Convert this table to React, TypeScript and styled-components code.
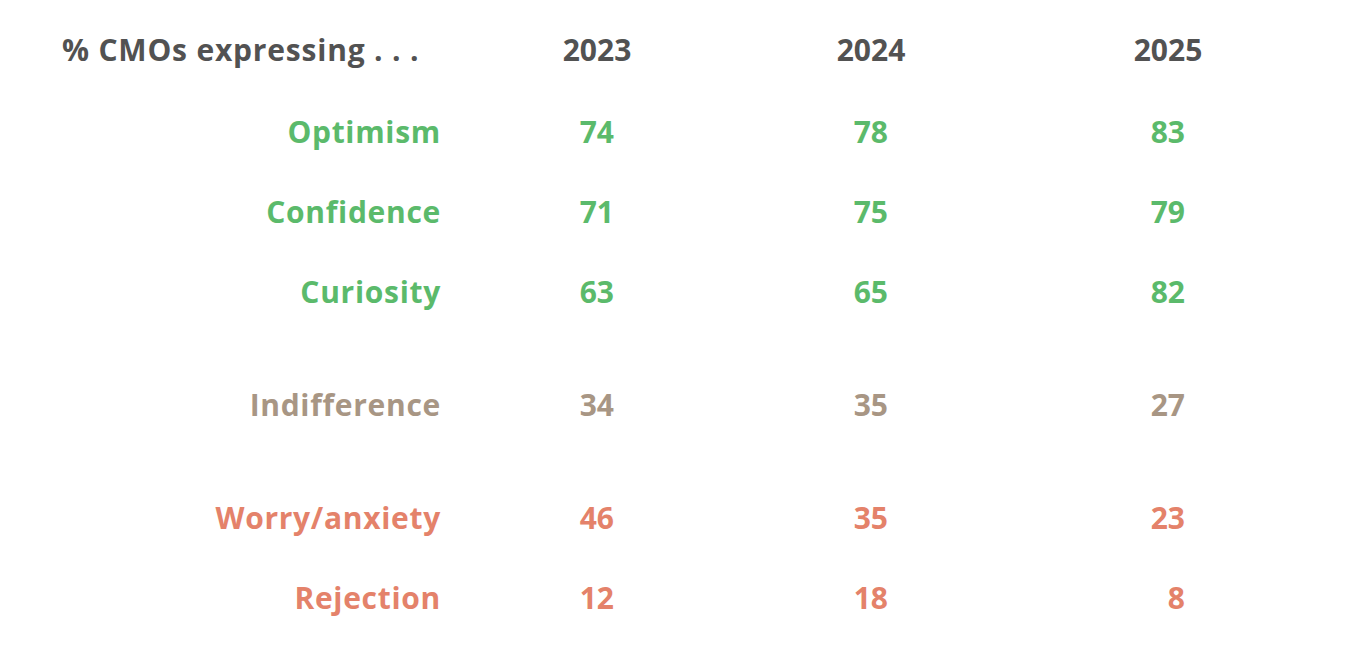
import React from "react";
import styled, { createGlobalStyle } from "styled-components";

const Global = createGlobalStyle`
  html, body { margin: 0; padding: 0; background: #ffffff; }
  body { font-family: "Open Sans", sans-serif; }
`;

type Tone = "green" | "tan" | "red" | "head";
const colors: Record<Tone, string> = {
  green: "#5bba6b",
  tan: "#a89684",
  red: "#e4826a",
  head: "#525252",
};

const Table = styled.div`
  display: grid;
  grid-template-columns: 441px 196px 274px 297px;
  padding-top: 8px;
  width: 1352px;
  box-sizing: border-box;
`;

const Cell = styled.div<{ $tone: Tone }>`
  height: 80px;
  display: flex;
  align-items: center;
  font-family: "Open Sans", sans-serif;
  font-weight: 700;
  font-size: 30px;
  color: ${(p) => colors[p.$tone]};
  white-space: nowrap;
`;

const HeadCell = styled(Cell)`
  height: 83px;
`;

const HeadLabel = styled(HeadCell)`
  padding-left: 62px;
  justify-content: flex-start;
  letter-spacing: 0.8px;
`;

const Year = styled(HeadCell)`
  justify-self: end;
  width: 80px;
  justify-content: center;
`;

const RowLabel = styled(Cell)`
  justify-content: flex-end;
  letter-spacing: 0.7px;
`;

const Value = styled(Cell)`
  justify-self: end;
  width: 80px;
  padding-right: 23px;
  box-sizing: border-box;
  justify-content: flex-end;
`;

const Spacer = styled.div<{ $h: number }>`
  grid-column: 1 / -1;
  height: ${(p) => p.$h}px;
`;

type Row = { label: string; tone: Tone; values: string[] };

const groups: Row[][] = [
  [
    { label: "Optimism", tone: "green", values: ["74", "78", "83"] },
    { label: "Confidence", tone: "green", values: ["71", "75", "79"] },
    { label: "Curiosity", tone: "green", values: ["63", "65", "82"] },
  ],
  [{ label: "Indifference", tone: "tan", values: ["34", "35", "27"] }],
  [
    { label: "Worry/anxiety", tone: "red", values: ["46", "35", "23"] },
    { label: "Rejection", tone: "red", values: ["12", "18", "8"] },
  ],
];

export default function App() {
  return (
    <>
      <Global />
      <Table>
        <HeadLabel $tone="head">% CMOs expressing . . .</HeadLabel>
        {["2023", "2024", "2025"].map((y) => (
          <Year key={y} $tone="head">
            {y}
          </Year>
        ))}
        {groups.map((g, gi) => (
          <React.Fragment key={gi}>
            {gi > 0 && <Spacer $h={33} />}
            {g.map((r) => (
              <React.Fragment key={r.label}>
                <RowLabel $tone={r.tone}>{r.label}</RowLabel>
                {r.values.map((v, i) => (
                  <Value key={i} $tone={r.tone}>
                    {v}
                  </Value>
                ))}
              </React.Fragment>
            ))}
          </React.Fragment>
        ))}
      </Table>
    </>
  );
}
